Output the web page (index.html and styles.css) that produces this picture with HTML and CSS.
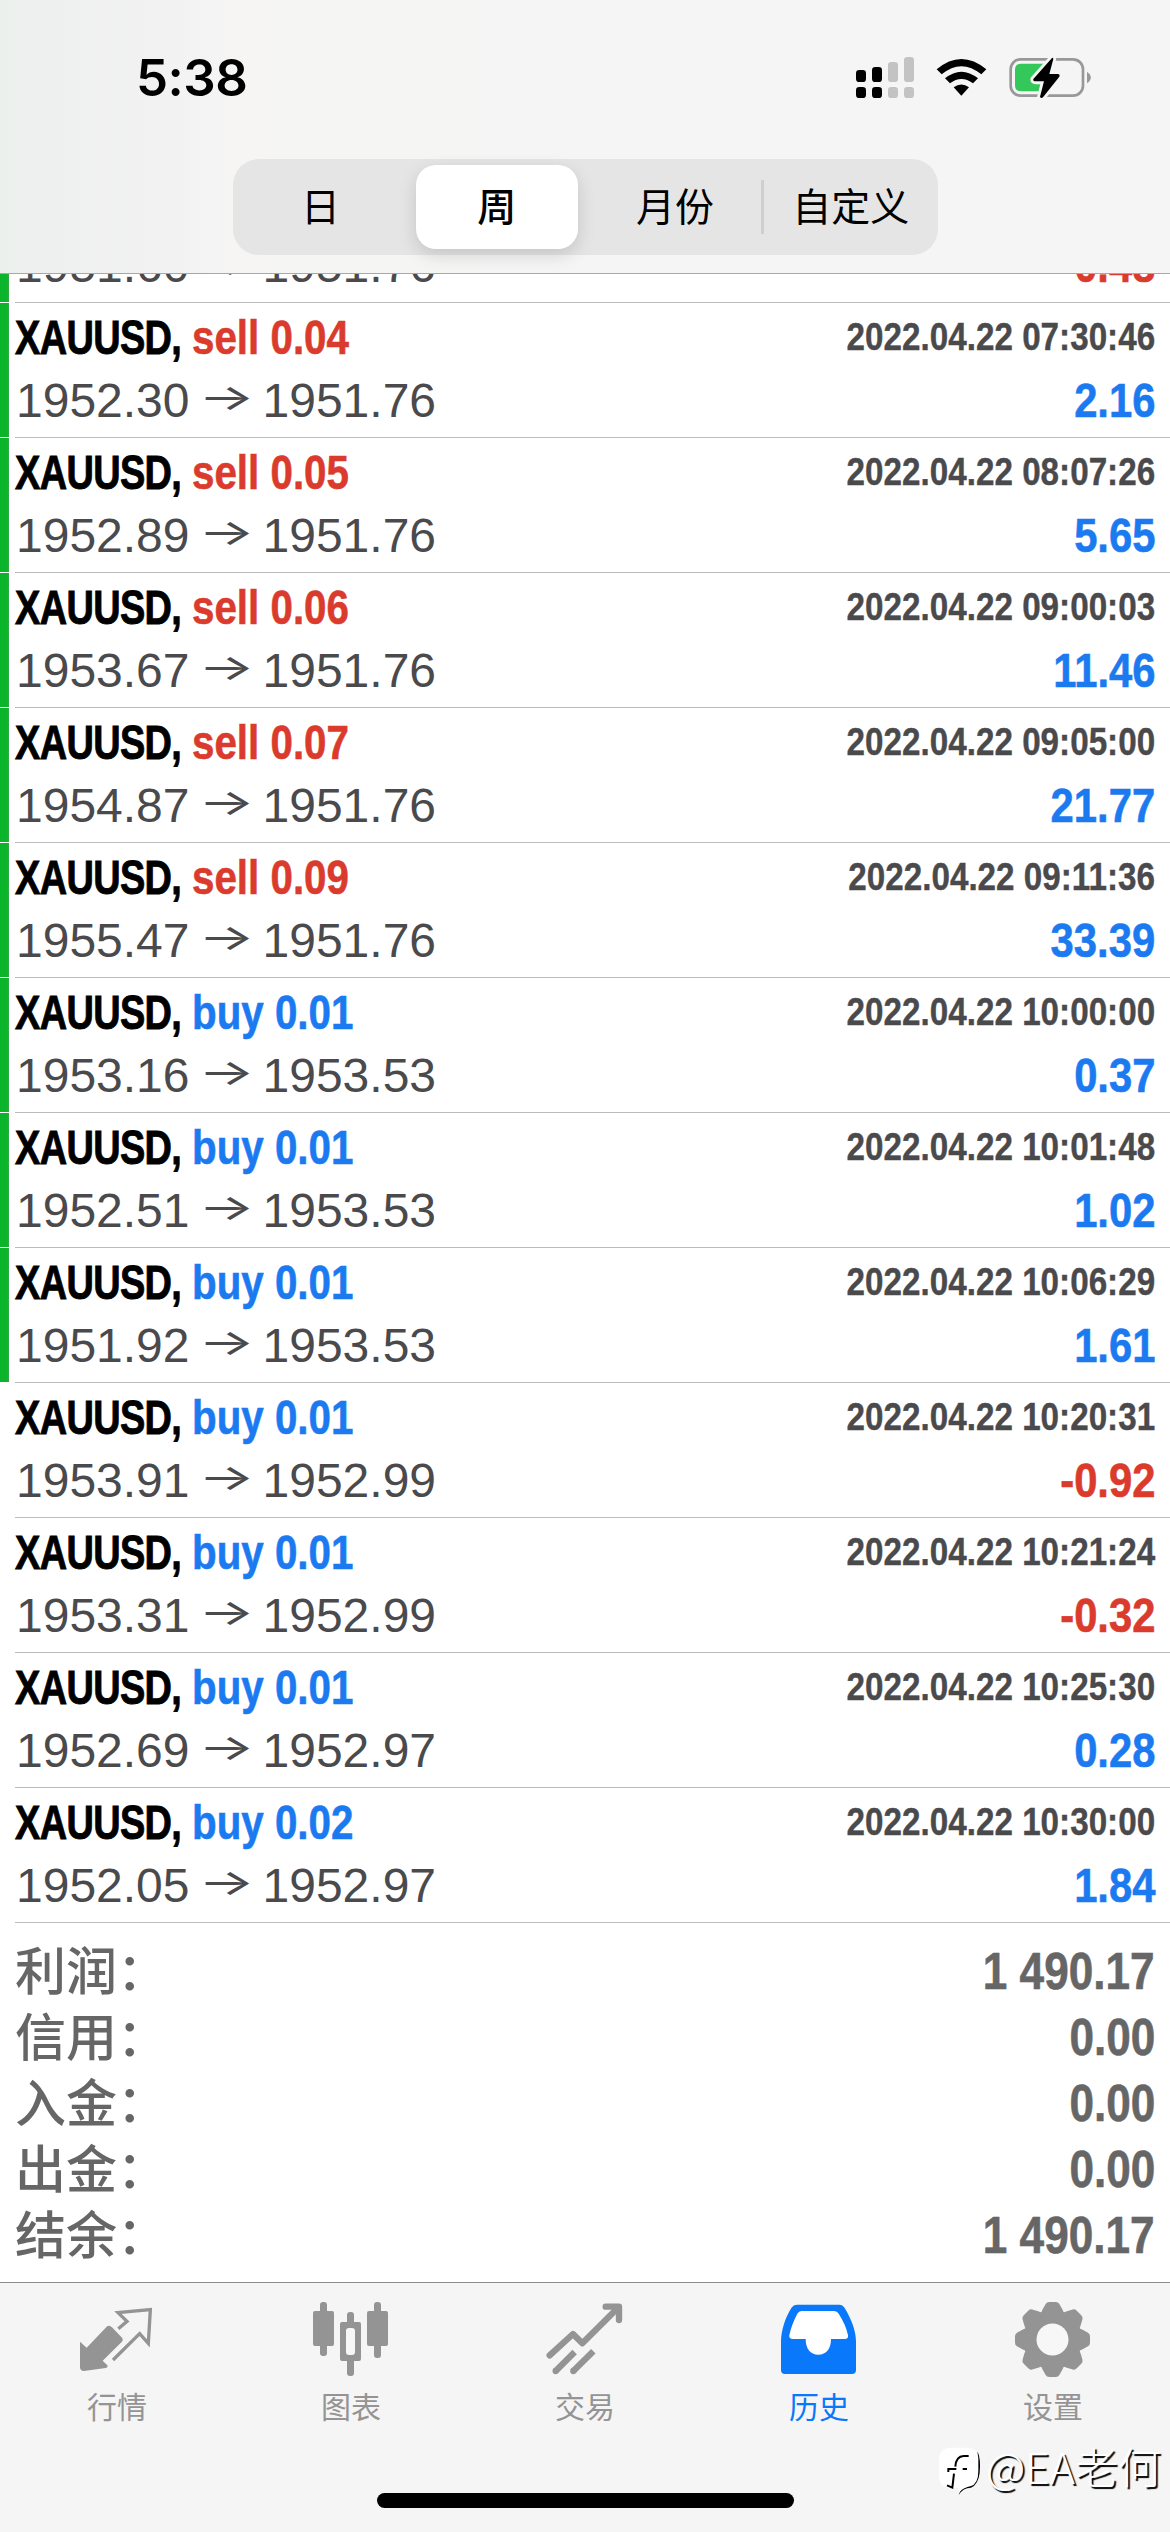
FILE: index.html
```html
<!DOCTYPE html>
<html lang="zh-CN">
<head>
<meta charset="utf-8">
<title>历史</title>
<link rel="stylesheet" href="styles.css">
</head>
<body>
<div class="screen">
  <header class="header">
    <div class="status">
      <span class="time">5:38</span>
      <div class="status-icons">
        <svg width="60" height="45" viewBox="45 45 180 135">
          <g fill="#000"><rect x="48" y="90" width="30" height="36" rx="10"/><rect x="96" y="81" width="30" height="45" rx="10"/><rect x="48" y="141" width="30" height="33" rx="10"/><rect x="96" y="141" width="30" height="33" rx="10"/></g>
          <g fill="#c3c3c3"><rect x="144" y="66" width="30" height="60" rx="10"/><rect x="192" y="51" width="30" height="75" rx="10"/><rect x="144" y="141" width="30" height="33" rx="10"/><rect x="192" y="141" width="30" height="33" rx="10"/></g>
        </svg>
        <svg width="53" height="45" viewBox="285 45 159 135">
          <path d="M290 88Q364 26 439 88L424 103Q364 54 305 103Z"/>
          <path d="M315 115Q364 75 414 115L399 130Q364 104 330 130Z"/>
          <path d="M341 142Q364 125 387 142L364 167Z"/>
        </svg>
        <svg width="85" height="45" viewBox="504 45 255 135">
          <rect x="512" y="58" width="217" height="109" rx="30" fill="none" stroke="#98989a" stroke-width="8"/>
          <path d="M741 95Q764 112 741 130Z" fill="#98989a"/>
          <path d="M543 71H612V154H543Q525 154 525 136V89Q525 71 543 71Z" fill="#34c759"/>
          <path d="M636 54L580 117Q578 124 587 124H612L600 170Q603 177 609 172L658 110Q661 103 653 102H628L640 57Q639 52 636 54Z" stroke="#f5f5f5" stroke-width="17" paint-order="stroke"/>
        </svg>
      </div>
    </div>
    <nav class="segments">
      <span class="segment">日</span>
      <span class="segment selected">周</span>
      <span class="segment">月份</span>
      <span class="segment divided">自定义</span>
    </nav>
  </header>

  <ul class="deals">
    <li class="deal closed"><div class="body"><div class="line"><span class="name"><b class="symbol">XAUUSD,</b><b class="side sell">sell 0.03</b></span><b class="date">2022.04.22 07:19:32</b></div><div class="line"><span class="prices">1951.60<i class="arrow">→</i>1951.76</span><b class="profit loss">-0.48</b></div></div></li>
    <li class="deal closed"><div class="body"><div class="line"><span class="name"><b class="symbol">XAUUSD,</b><b class="side sell">sell 0.04</b></span><b class="date">2022.04.22 07:30:46</b></div><div class="line"><span class="prices">1952.30<i class="arrow">→</i>1951.76</span><b class="profit">2.16</b></div></div></li>
    <li class="deal closed"><div class="body"><div class="line"><span class="name"><b class="symbol">XAUUSD,</b><b class="side sell">sell 0.05</b></span><b class="date">2022.04.22 08:07:26</b></div><div class="line"><span class="prices">1952.89<i class="arrow">→</i>1951.76</span><b class="profit">5.65</b></div></div></li>
    <li class="deal closed"><div class="body"><div class="line"><span class="name"><b class="symbol">XAUUSD,</b><b class="side sell">sell 0.06</b></span><b class="date">2022.04.22 09:00:03</b></div><div class="line"><span class="prices">1953.67<i class="arrow">→</i>1951.76</span><b class="profit">11.46</b></div></div></li>
    <li class="deal closed"><div class="body"><div class="line"><span class="name"><b class="symbol">XAUUSD,</b><b class="side sell">sell 0.07</b></span><b class="date">2022.04.22 09:05:00</b></div><div class="line"><span class="prices">1954.87<i class="arrow">→</i>1951.76</span><b class="profit">21.77</b></div></div></li>
    <li class="deal closed"><div class="body"><div class="line"><span class="name"><b class="symbol">XAUUSD,</b><b class="side sell">sell 0.09</b></span><b class="date">2022.04.22 09:11:36</b></div><div class="line"><span class="prices">1955.47<i class="arrow">→</i>1951.76</span><b class="profit">33.39</b></div></div></li>
    <li class="deal closed"><div class="body"><div class="line"><span class="name"><b class="symbol">XAUUSD,</b><b class="side">buy 0.01</b></span><b class="date">2022.04.22 10:00:00</b></div><div class="line"><span class="prices">1953.16<i class="arrow">→</i>1953.53</span><b class="profit">0.37</b></div></div></li>
    <li class="deal closed"><div class="body"><div class="line"><span class="name"><b class="symbol">XAUUSD,</b><b class="side">buy 0.01</b></span><b class="date">2022.04.22 10:01:48</b></div><div class="line"><span class="prices">1952.51<i class="arrow">→</i>1953.53</span><b class="profit">1.02</b></div></div></li>
    <li class="deal closed"><div class="body"><div class="line"><span class="name"><b class="symbol">XAUUSD,</b><b class="side">buy 0.01</b></span><b class="date">2022.04.22 10:06:29</b></div><div class="line"><span class="prices">1951.92<i class="arrow">→</i>1953.53</span><b class="profit">1.61</b></div></div></li>
    <li class="deal"><div class="body"><div class="line"><span class="name"><b class="symbol">XAUUSD,</b><b class="side">buy 0.01</b></span><b class="date">2022.04.22 10:20:31</b></div><div class="line"><span class="prices">1953.91<i class="arrow">→</i>1952.99</span><b class="profit loss">-0.92</b></div></div></li>
    <li class="deal"><div class="body"><div class="line"><span class="name"><b class="symbol">XAUUSD,</b><b class="side">buy 0.01</b></span><b class="date">2022.04.22 10:21:24</b></div><div class="line"><span class="prices">1953.31<i class="arrow">→</i>1952.99</span><b class="profit loss">-0.32</b></div></div></li>
    <li class="deal"><div class="body"><div class="line"><span class="name"><b class="symbol">XAUUSD,</b><b class="side">buy 0.01</b></span><b class="date">2022.04.22 10:25:30</b></div><div class="line"><span class="prices">1952.69<i class="arrow">→</i>1952.97</span><b class="profit">0.28</b></div></div></li>
    <li class="deal"><div class="body"><div class="line"><span class="name"><b class="symbol">XAUUSD,</b><b class="side">buy 0.02</b></span><b class="date">2022.04.22 10:30:00</b></div><div class="line"><span class="prices">1952.05<i class="arrow">→</i>1952.97</span><b class="profit">1.84</b></div></div></li>
  </ul>

  <dl class="summary">
    <div class="total"><dt>利润：</dt><dd>1 490.17</dd></div>
    <div class="total"><dt>信用：</dt><dd>0.00</dd></div>
    <div class="total"><dt>入金：</dt><dd>0.00</dd></div>
    <div class="total"><dt>出金：</dt><dd>0.00</dd></div>
    <div class="total"><dt>结余：</dt><dd>1 490.17</dd></div>
  </dl>

  <footer class="footer">
    <nav class="tabs">
      <a class="tab">
        <svg class="icon" viewBox="45 24 252 252">
          <path fill="currentColor" d="M60 155L80 173L140 110Q148 104 156 112L186 143Q191 149 185 156L128 212L142 226Q145 232 137 234L72 243Q60 243 60 232Z"/>
          <path fill="none" stroke="currentColor" stroke-width="10" d="M175 116L201 94L174 68L271 59L265 160L239 131L159 210"/>
        </svg>
        <span>行情</span>
      </a>
      <a class="tab">
        <svg class="icon" viewBox="747 24 252 252">
          <g fill="currentColor"><rect x="780" y="36" width="21" height="162" rx="9"/><rect x="759" y="63" width="63" height="105" rx="6"/><rect x="942" y="36" width="21" height="168" rx="9"/><rect x="921" y="63" width="63" height="105" rx="6"/><rect x="861" y="66" width="21" height="192" rx="9"/><rect x="840" y="96" width="63" height="117" rx="6"/></g>
          <rect x="858" y="114" width="27" height="81" rx="9" fill="#f7f7f7"/>
        </svg>
        <span>图表</span>
      </a>
      <a class="tab">
        <svg class="icon" viewBox="39 24 252 252">
          <g fill="none" stroke="currentColor" stroke-width="19" stroke-linecap="round" stroke-linejoin="round"><path d="M59 196L129 132L157 160L264 53"/><path d="M227 50H267V90"/><path stroke-linecap="butt" d="M77 243L134 186M130 243L190 184"/><path d="M77 243h.1M130 243h.1"/></g>
        </svg>
        <span>交易</span>
      </a>
      <a class="tab active">
        <svg class="icon" viewBox="741 24 252 252">
          <path fill="currentColor" d="M802 44H928Q938 44 944 54C965 88 978 125 978 155V240Q978 252 966 252H765Q753 252 753 240V155C753 122 766 82 784 54Q790 44 802 44Z"/>
          <path fill="#fff" d="M815 63H912Q922 63 926 71Q948 105 954 136Q956 147 944 147H903C903 176 889 194 865 194S827 176 827 147H789Q776 147 778 136Q784 105 802 71Q806 63 815 63Z"/>
        </svg>
        <span>历史</span>
      </a>
      <a class="tab">
        <svg class="icon" viewBox="273 24 252 252">
          <defs><path id="tooth" d="M359 78L368 58L377 42Q380 36 388 36H407Q415 36 418 42L427 58L436 78Z"/></defs>
          <g fill="currentColor"><circle cx="397.500" cy="148.500" r="88"/><use href="#tooth"/><use href="#tooth" transform="rotate(45 397.500 148.500)"/><use href="#tooth" transform="rotate(90 397.500 148.500)"/><use href="#tooth" transform="rotate(135 397.500 148.500)"/><use href="#tooth" transform="rotate(180 397.500 148.500)"/><use href="#tooth" transform="rotate(225 397.500 148.500)"/><use href="#tooth" transform="rotate(270 397.500 148.500)"/><use href="#tooth" transform="rotate(315 397.500 148.500)"/></g>
          <circle cx="397.500" cy="148.500" r="48" fill="#f7f7f7"/>
        </svg>
        <span>设置</span>
      </a>
    </nav>
    <div class="home-indicator"></div>
    <div class="watermark">
      <svg width="46" height="52" viewBox="48 462 138 156">
        <path fill="#000" d="M170 482Q180 505 176 545Q172 580 150 590Q126 590 113 612L120 594Q160 585 165 545Z"/>
        <path fill="#fff" d="M90 470H140Q172 472 172 505V540Q172 580 148 586Q128 588 113 606L114 591H84Q54 588 54 555V505Q54 472 90 470Z"/>
        <path fill="none" stroke="#000" stroke-width="6" d="M143 495H128Q105 496 103 527M82 543V534H106M125 534H138M99 548L94 590L78 583"/>
      </svg>
      <span>@EA老何</span>
    </div>
  </footer>
</div>
</body>
</html>
```
FILE: styles.css
```css
* {
  box-sizing: border-box;
}

body,
ul,
dl,
dd {
  margin: 0;
  padding: 0;
}

body {
  background: #fff;
  font-family: "Liberation Sans", "Noto Sans CJK SC", sans-serif;
}

.screen {
  display: flex;
  flex-direction: column;
  width: 1170px;
  height: 2532px;
  overflow: hidden;
}

/* Header */
.header {
  flex: none;
  height: 274px;
  border-bottom: 1px solid #a8a8a8;
  background: linear-gradient(90deg, #ecf0ed 0, #eef0ef 45px, #f1f1f2 130px, #f4f3f4 190px, #f6f5f4 230px, #f5f5f5 500px);
}

.status {
  display: flex;
  justify-content: space-between;
  height: 159px;
  padding: 55px 77px 0 136px;
}

.time {
  font: 600 51px/46px Inter, sans-serif;
  letter-spacing: -0.5px;
}

.status-icons {
  display: flex;
  gap: 20px;
}

.segments {
  display: grid;
  grid-template-columns: repeat(4, 1fr);
  align-items: center;
  width: 705px;
  height: 96px;
  margin: 0 auto;
  border-radius: 26px;
  background: #e6e5e6;
  font: 400 39px/79px "Noto Sans CJK SC", sans-serif;
  text-align: center;
}

.segment {
  height: 84px;
}

.selected {
  margin: 0 7px;
  border-radius: 20px;
  background: #fff;
  box-shadow: 0 6px 18px rgba(0, 0, 0, 0.14);
  font-weight: 500;
}

.selected + .segment {
  padding-left: 4px;
}

.divided {
  display: flex;
  justify-content: center;
}

.divided::before {
  content: "";
  width: 3px;
  height: 54px;
  margin: 15px auto 0 0;
  background: #cfcfd1;
}

.divided::after {
  content: "";
  margin-left: auto;
}

/* Closed deals */
.deals {
  display: flex;
  flex: none;
  flex-direction: column;
  justify-content: flex-end;
  height: 1649px;
  overflow: hidden;
  list-style: none;
}

.deal {
  display: flex;
  flex: none;
  height: 135px;
}

.deal::before {
  content: "";
  flex: none;
  width: 9px;
  height: 134px;
  margin-right: 6px;
}

.closed::before {
  background: linear-gradient(90deg, #0ab52b 7px, #3aa845);
}

.body {
  flex: 1;
  padding: 3px 15px 0 0;
  border-bottom: 1px solid #bcbcbe;
}

.line {
  display: flex;
  justify-content: space-between;
  height: 63px;
  font-size: 48px;
  line-height: 63px;
  white-space: nowrap;
}

.name {
  display: flex;
}

.symbol {
  width: 177px;
  transform: scaleX(0.79);
  transform-origin: left;
  letter-spacing: -0.8px;
  -webkit-text-stroke: 0.9px;
}

.side {
  color: #1c7af0;
  transform: scaleX(0.84);
  transform-origin: left;
  -webkit-text-stroke: 0.6px;
}

.sell {
  color: #da3b2c;
}

.date {
  margin-top: -1px;
  color: #4a4a4d;
  font-size: 39px;
  transform: scaleX(0.852);
  transform-origin: right;
  -webkit-text-stroke: 0.4px;
}

.prices {
  display: flex;
  padding-left: 1px;
  color: #4a4a4d;
}

.arrow {
  width: 73px;
  font: 400 36px/56px Inter, sans-serif;
  text-align: center;
  transform: scaleX(1.65);
}

.profit {
  color: #1c7af0;
  transform: scaleX(0.87);
  transform-origin: right;
  -webkit-text-stroke: 0.6px;
}

.loss {
  color: #da3b2c;
}

/* Account totals */
.summary {
  flex: none;
  height: 359px;
  padding: 16px 15px 0;
  color: #666;
}

.total {
  display: flex;
  justify-content: space-between;
  height: 66px;
  font-size: 51px;
  line-height: 66px;
}

dt {
  font-family: "Noto Sans CJK SC", sans-serif;
  font-weight: 500;
  line-height: 58px;
}

dd {
  font-weight: 700;
  transform: scaleX(0.865);
  transform-origin: right;
  -webkit-text-stroke: 0.6px;
}

/* Tab bar */
.footer {
  position: relative;
  flex: 1;
  border-top: 1px solid #8c8c8c;
  background: #f5f5f5;
}

.tabs {
  display: grid;
  grid-template-columns: repeat(5, 1fr);
  height: 210px;
  padding-top: 15px;
}

.tab {
  display: flex;
  flex-direction: column;
  align-items: center;
  color: #949494;
  font: 400 30px/44px "Noto Sans CJK SC", sans-serif;
}

.active {
  color: #0a78fa;
}

.icon {
  width: 84px;
  height: 84px;
  margin-bottom: 1px;
}

.home-indicator {
  width: 417px;
  height: 15px;
  margin: 0 auto;
  border-radius: 8px;
  background: #000;
}

.watermark {
  position: absolute;
  right: 9px;
  bottom: 35px;
  display: flex;
  gap: 3px;
  color: #fff;
  font: 300 43px/40px "Noto Sans CJK SC", sans-serif;
  text-shadow: 2px 2px 1px #000;
}
```
